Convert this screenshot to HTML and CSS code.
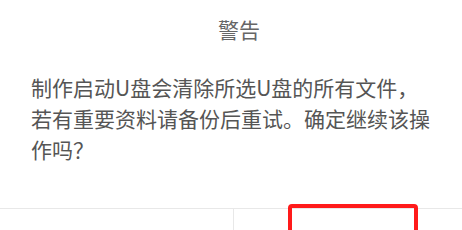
FILE: index.html
```html
<!DOCTYPE html>
<html lang="zh-CN">
<head>
<meta charset="utf-8">
<link rel="stylesheet" href="styles.css">
</head>
<body>
<div class="dialog">
  <div class="title">警告</div>
  <div class="msg">制作启动U盘会清除所选U盘的所有文件，若有重要资料请备份后重试。确定继续该操作吗？</div>
  <div class="footer">
    <div class="btn"></div>
    <div class="btn btn-ok"></div>
    <div class="highlight"></div>
  </div>
</div>
</body>
</html>
```
FILE: styles.css
```css
html, body {
  margin: 0;
  padding: 0;
  background: #ffffff;
  overflow: hidden;
}
.dialog {
  width: 466px;
  font-family: "Noto Sans CJK SC", "Noto Sans", sans-serif;
}
.title {
  text-align: center;
  font-size: 21px;
  line-height: 28px;
  padding-top: 15px;
  padding-left: 12px;
  color: #666666;
}
.msg {
  margin-top: 29px;
  padding-left: 31px;
  width: 402px;
  font-size: 21px;
  line-height: 31px;
  color: #555555;
}
.footer {
  position: relative;
  margin-top: 43px;
  border-top: 1px solid #e8e8e8;
  display: flex;
  height: 40px;
}
.btn {
  flex: 1;
}
.btn + .btn {
  border-left: 1px solid #e8e8e8;
}
.highlight {
  position: absolute;
  left: 288px;
  top: -5px;
  width: 122px;
  height: 46px;
  border: 4px solid #ff1a1a;
  border-radius: 4px;
}
```
